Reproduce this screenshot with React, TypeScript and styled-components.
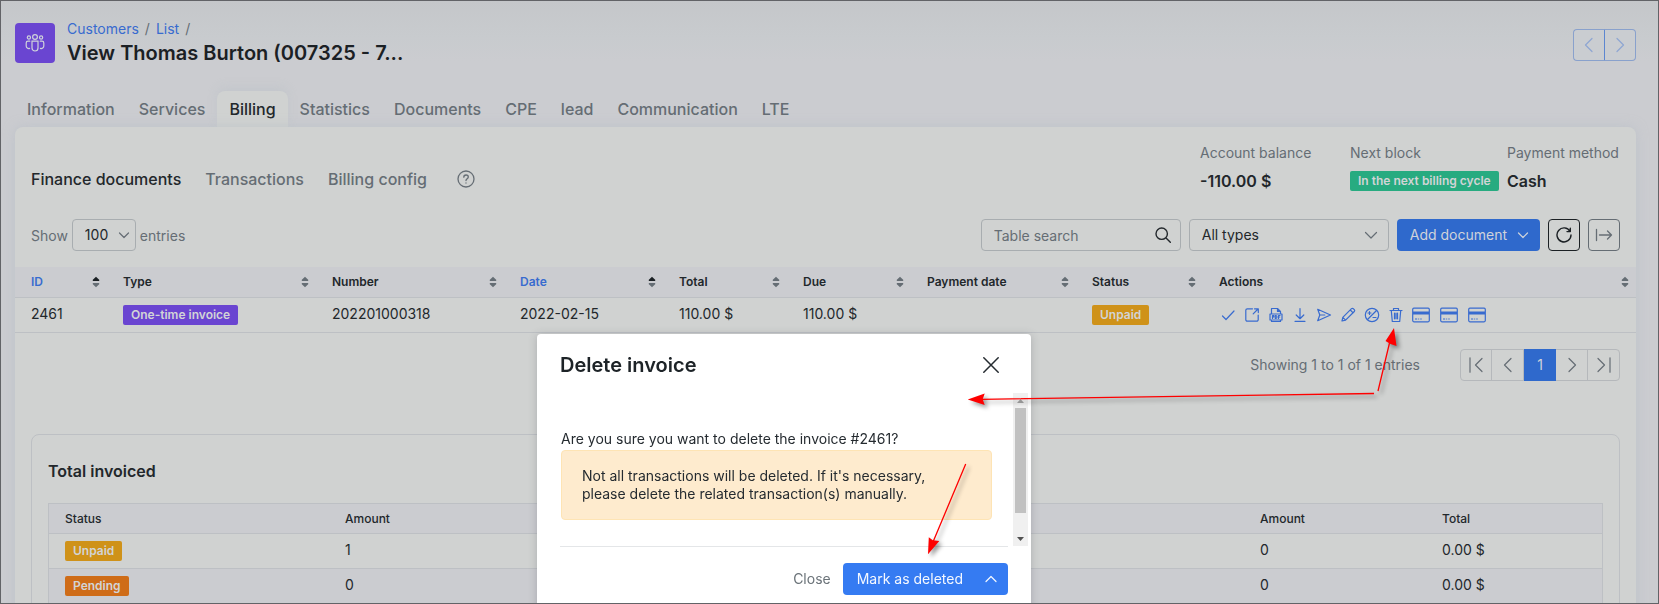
import React from "react";
import styled, { createGlobalStyle, css } from "styled-components";

const c = {
  page: "#cbccd0",
  card: "#d0d2d1",
  line: "#bdc0c4",
  border: "#a8adb0",
  muted: "#656d74",
  text: "#22272b",
  link: "#386bcf",
  primary: "#2f69cc",
  purple: "#6a45d1",
  green: "#27ab80",
  yellow: "#cf9219",
  orange: "#cf6c18",
  pale: "#cfd3da",
};

const Global = createGlobalStyle`
  *, *::before, *::after { box-sizing: border-box; }
  body {
    margin: 0;
    color: ${c.text};
    font: 400 14px/20px Inter, "Liberation Sans", sans-serif;
    background: ${c.page};
  }
  button, input, select { font: inherit; color: inherit; margin: 0; }
  a { color: ${c.link}; text-decoration: none; }
  h1, h2, p, dl, dd { margin: 0; }
`;

const Page = styled.div`
  height: 100vh;
  overflow: hidden;
  border: 1px solid #626367;
  padding: 22px 22px 0 14px;
  background: linear-gradient(#c5c7ca, #c8cbce 36px, ${c.page} 60px);
`;

const Header = styled.header`
  display: flex;
  align-items: flex-start;
  justify-content: space-between;
  height: 68px;
`;

const Heading = styled.div`
  display: flex;
  gap: 12px;
`;

const Logo = styled.div`
  display: grid;
  place-items: center;
  width: 40px;
  height: 40px;
  border-radius: 4px;
  background: ${c.purple};
  color: ${c.pale};
`;

const Crumbs = styled.nav`
  display: flex;
  gap: 6px;
  margin-top: -4px;
  color: ${c.muted};
`;

const Title = styled.h1`
  margin-top: 1px;
  font-size: 20px;
  line-height: 26px;
  font-weight: 600;
  color: #1b2024;
`;

const ButtonGroup = styled.div`
  display: flex;
`;

const NavButton = styled.button`
  display: grid;
  place-items: center;
  width: 31px;
  height: 32px;
  margin-top: 6px;
  padding: 0;
  border: 1px solid #89a1cc;
  background: #cacdd1;
  color: #8ea6d2;
  &:first-child { width: 32px; border-radius: 4px 0 0 4px; border-right-color: #5c86d0; }
  &:last-child { border-radius: 0 4px 4px 0; border-left: 0; }
`;

const Tabs = styled.nav`
  display: flex;
`;

const Tab = styled.a<{ $active?: boolean }>`
  height: 36px;
  padding: 8px 12px;
  font-size: 16px;
  line-height: 20px;
  font-weight: 500;
  color: ${c.muted};
  ${(p) => p.$active && css`
    color: ${c.text};
    background: ${c.card};
    border-radius: 8px 8px 0 0;
    box-shadow: 0 -4px 10px rgba(180, 190, 195, 0.3);
  `}
`;

const Card = styled.main`
  position: relative;
  min-height: 600px;
  border-radius: 8px;
  background: ${c.card};
  box-shadow: 0 0 12px rgba(178, 187, 196, 0.55);
`;

const CardTop = styled.div`
  display: flex;
  justify-content: space-between;
  align-items: flex-start;
  height: 92px;
  padding: 16px 16px 0;
`;

const SubNav = styled.nav`
  display: flex;
  align-items: center;
  gap: 24px;
  margin-top: 26px;
`;

const SubLink = styled.a<{ $active?: boolean }>`
  font-size: 16px;
  font-weight: 500;
  color: ${(p) => (p.$active ? c.text : c.muted)};
`;

const Help = styled.button`
  display: grid;
  margin-left: 6px;
  padding: 0;
  border: 0;
  background: none;
  color: ${c.muted};
`;

const Facts = styled.dl`
  display: grid;
  grid-template-columns: 150px 149px 121px;
  column-gap: 0;
`;

const Fact = styled.div`
  &:last-child { padding-left: 8px; }
  dt { color: ${c.muted}; }
  dd {
    display: flex;
    align-items: center;
    height: 20px;
    margin-top: 8px;
    font-size: 16px;
    font-weight: 600;
  }
`;

const Badge = styled.span<{ $color: string }>`
  display: inline-block;
  height: 20px;
  padding: 0 8px;
  border-radius: 2px;
  font-size: 12px;
  line-height: 20px;
  font-weight: 600;
  white-space: nowrap;
  vertical-align: top;
  color: #d2d4d6;
  background: ${(p) => p.$color};
`;

const Toolbar = styled.div`
  display: flex;
  justify-content: space-between;
  height: 48px;
  padding: 0 16px;
`;

const Group = styled.div<{ $gap: number }>`
  display: flex;
  align-items: center;
  gap: ${(p) => p.$gap}px;
  height: 32px;
`;

const Muted = styled.label`
  line-height: 22px;
  padding-top: 2px;
  color: ${c.muted};
`;

const Field = styled.div<{ $width: number; $iconColor?: string }>`
  position: relative;
  width: ${(p) => p.$width}px;
  height: 32px;
  color: ${(p) => p.$iconColor || c.muted};
  svg {
    position: absolute;
    right: 10px;
    top: 8px;
    pointer-events: none;
  }
  select + svg { right: ${(p) => (p.$width > 100 ? 10 : 4)}px; }
  input, select {
    width: 100%;
    height: 32px;
    padding: 0 12px;
    border: 1px solid ${c.border};
    border-radius: 4px;
    background: transparent;
    color: ${c.text};
    appearance: none;
    outline: 0;
  }
  input::placeholder { color: ${c.muted}; opacity: 1; }
`;

const Primary = styled.button<{ $color: string; $ink: string; $wide?: boolean }>`
  display: flex;
  align-items: center;
  gap: ${(p) => (p.$wide ? 20 : 8)}px;
  height: 32px;
  padding: ${(p) => (p.$wide ? "0 9px 0 14px" : "0 9px 0 13px")};
  border: 0;
  border-radius: 4px;
  white-space: nowrap;
  background: ${(p) => p.$color};
  color: ${(p) => p.$ink};
`;

const Square = styled.button<{ $color: string }>`
  display: grid;
  place-items: center;
  width: 32px;
  height: 32px;
  padding: 0;
  border: 1px solid ${(p) => p.$color};
  border-radius: 4px;
  background: transparent;
  color: ${(p) => p.$color};
`;

const Table = styled.table`
  width: 100%;
  table-layout: fixed;
  border-collapse: separate;
  border-spacing: 0;
  th, td {
    padding: 0 16px;
    text-align: left;
    border-bottom: 1px solid ${c.line};
    white-space: nowrap;
  }
  th {
    height: 31px;
    font-size: 12px;
    background: ${c.page};
  }
  td { height: 35px; padding: 7px 16px; vertical-align: top; line-height: 18px; }
`;

const Th = styled.th<{ $sorted?: boolean }>`
  font-weight: 600;
  color: ${(p) => (p.$sorted ? c.link : c.text)};
  > div { display: flex; justify-content: space-between; align-items: center; margin-right: -9px; }
`;

const Actions = styled.div`
  display: flex;
  align-items: center;
  gap: 8px;
  height: 20px;
  padding-left: 1px;
  color: ${c.link};
  button {
    display: grid;
    place-items: center;
    min-width: 16px;
    padding: 0;
    border: 0;
    background: none;
  }
  button:nth-child(n + 10) { margin-left: 2px; }
`;

const PagerRow = styled.div`
  display: flex;
  justify-content: flex-end;
  align-items: center;
  gap: 40px;
  padding: 16px 16px 0;
  color: ${c.muted};
`;

const Pager = styled.nav`
  display: flex;
  border: 1px solid #b5b8bb;
  border-radius: 4px;
`;

const PageButton = styled.button<{ $active?: boolean }>`
  display: grid;
  place-items: center;
  width: 32px;
  height: 30px;
  padding: 0;
  border: 0;
  border-right: 1px solid #b5b8bb;
  background: none;
  &:first-child { width: 31px; }
  &:last-child { border-right: 0; width: 31px; }
  ${(p) => p.$active && css`
    height: 32px;
    margin: -1px 0;
    border: 0;
    background: ${c.primary};
    color: ${c.pale};
  `}
`;

const Totals = styled.section`
  margin: 53px 16px 0;
  padding: 26px 16px;
  border: 1px solid ${c.line};
  border-radius: 8px;
  h2 { font-size: 16px; line-height: 20px; font-weight: 600; margin-bottom: 22px; }
`;

const TotalsTable = styled(Table)`
  border: 1px solid ${c.line};
  border-bottom: 0;
  th { font-weight: 500; height: 30px; }
  tbody tr:nth-child(even) { background: ${c.page}; }
`;

const Overlay = styled.div`
  position: fixed;
  inset: 1px;
  overflow: hidden;
  display: flex;
  justify-content: center;
  align-items: flex-start;
  padding: 333px 91px 0 0;
`;

const Dialog = styled.div`
  width: 494px;
  height: 300px;
  border-radius: 4px;
  background: #fff;
  color: #252b30;
  box-shadow: 0 1px 8px rgba(60, 65, 70, 0.25);
`;

const DialogHead = styled.div`
  display: flex;
  justify-content: space-between;
  align-items: center;
  height: 59px;
  padding: 3px 32px 0 23px;
  h2 { font-size: 20px; line-height: 28px; font-weight: 600; color: #1d2327; }
  button { display: grid; padding: 0; border: 0; background: none; }
`;

const DialogBody = styled.div`
  display: flex;
  height: 153px;
  margin-left: 23px;
`;

const Scrolled = styled.div`
  flex: 1;
  height: 154px;
  margin-right: 5px;
  padding: 36px 16px 0 1px;
  border-bottom: 1px solid #e4e6e8;
  p { margin-bottom: 1px; }
`;

const Notice = styled.div`
  height: 70px;
  padding: 16px 20px;
  border: 1px solid #fee4b4;
  border-radius: 4px;
  line-height: 18px;
  background: #feebce;
`;

const ScrollBar = styled.div`
  display: flex;
  flex-direction: column;
  align-items: center;
  width: 15px;
  margin-right: 3px;
  background: #f0f0f0;
`;

const Arrow = styled.span<{ $down?: boolean }>`
  display: grid;
  place-items: center;
  height: 15px;
  color: ${(p) => (p.$down ? "#505050" : "#a3a3a3")};
  margin-top: ${(p) => (p.$down ? "auto" : 0)};
`;

const Thumb = styled.div`
  width: 11px;
  height: 105px;
  background: #c1c1c1;
`;

const DialogFoot = styled.div`
  display: flex;
  justify-content: flex-end;
  align-items: center;
  gap: 12px;
  padding: 17px 23px 0;
`;

const Plain = styled.button`
  padding: 0;
  border: 0;
  background: none;
  && { color: #6b7379; }
`;

const Annotations = styled.svg`
  position: fixed;
  top: 0;
  left: 0;
  pointer-events: none;
  filter: drop-shadow(3px 3px 2px rgba(0, 0, 0, 0.4));
`;

type IconProps = { d: string; size?: number; box?: number; sw?: number; w?: number };
const Icon = ({ d, size = 16, box = 16, sw = 1.2, w }: IconProps) => (
  <svg width={w ?? size} height={size} viewBox={`0 0 ${w ?? box} ${box}`} fill="none" stroke="currentColor" strokeWidth={sw} strokeLinecap="round" strokeLinejoin="round" aria-hidden="true">
    <path d={d} />
  </svg>
);

const DOWN = "M2.5 5.500 8 11l5.500-5.500";
const DOWN_SMALL = "M3.500 6 8 10.500 12.500 6";
const LEFT = "M11 1.500 4.500 8l6.500 6.500";
const RIGHT = "M5 1.500 11.500 8 5 14.500";

const Sort = ({ up }: { up?: boolean }) => (
  <svg width="8" height="12" viewBox="0 0 8 12" aria-hidden="true">
    <path d="M.8 5V3.700L4 .8l3.200 2.900V5z" fill={up ? "#1b2024" : c.muted} />
    <path d="M.8 7v1.300L4 11.200l3.200-2.900V7z" fill={c.muted} />
  </svg>
);

const CreditCard = () => (
  <svg width="18" height="16" viewBox="0 0 18 16" fill="none" stroke="currentColor" aria-hidden="true">
    <rect x=".7" y="1.200" width="16.600" height="13.600" rx="1.200" strokeWidth="1.200" />
    <path d="M1 6h16" strokeWidth="3" />
    <path d="M3 12h2.200M6.200 12h1M8.300 12h1.400" />
  </svg>
);

const ACTIONS: [string, string][] = [
  ["Mark as paid", "M2.500 9l3.500 3.500 8-8.500"],
  ["Open", "M8.500 1.800H3.300a1.500 1.500 0 0 0-1.500 1.500v9.400a1.500 1.500 0 0 0 1.500 1.500h9.400a1.500 1.500 0 0 0 1.500-1.500V8M10.500 1.800h3.800v3.800M14 2 9.200 6.800"],
  ["View PDF", "M3.500 7V1.500h6l3 3V7M9.500 1.500v3h3M2 7h12v6H2zM3.500 13v1.500h9V13M4.500 11.500v-3h1.300v1.500H4.500M7.300 8.500v3h.5c1.500 0 1.500-3 0-3zM10.500 11.500v-3h1.500M10.500 10h1.200"],
  ["Download", "M8 1.500v10M4.200 8 8 11.700 11.800 8M3 14.300h10"],
  ["Send", "M1.700 2.300 14.500 8 1.700 13.700 3.800 8zM3.800 8h5"],
  ["Edit", "M2 14l.8-3.600 8.700-8.700a1.300 1.300 0 0 1 1.800 0l1 1a1.300 1.300 0 0 1 0 1.800l-8.700 8.700zM10.300 3l2.800 2.800M2.800 10.400l2.800 2.800"],
  ["Discount", "M8 1.300a6.700 6.700 0 1 0 0 13.400A6.700 6.700 0 1 0 8 1.300M4 12l8-8M4 6h3M5.500 4.500v3M9 10.500h3"],
  ["Delete", "M2 3.500h12M5.500 3.300V1.500h5v1.800M3.300 3.800l1 10.700h7.400l1-10.700M6.500 6.200v5.600M8 6.200v5.600M9.500 6.200v5.600"],
];

const COLUMNS: { name: string; width?: number; sorted?: boolean }[] = [
  { name: "ID", width: 92, sorted: true },
  { name: "Type", width: 209 },
  { name: "Number", width: 188 },
  { name: "Date", width: 159, sorted: true },
  { name: "Total", width: 124 },
  { name: "Due", width: 124 },
  { name: "Payment date", width: 165 },
  { name: "Status", width: 127 },
  { name: "Actions" },
];

const TABS = ["Information", "Services", "Billing", "Statistics", "Documents", "CPE", "lead", "Communication", "LTE"];

export default function App() {
  return (
    <>
      <Global />
      <Page>
        <Header>
          <Heading>
            <Logo>
              <svg width="20" height="20" viewBox="0 0 20 20" fill="none" stroke="currentColor" strokeWidth="1.200" strokeLinecap="round" aria-hidden="true">
                <circle cx="10" cy="4" r="2.400" />
                <circle cx="3.900" cy="4.500" r="1.600" />
                <circle cx="16.100" cy="4.500" r="1.600" />
                <path d="M7 8.200h6V15a3 3 0 0 1-6 0zM4.800 8.200H3a1.800 1.800 0 0 0-1.800 1.800v3A2.600 2.600 0 0 0 4.600 15.400M15.200 8.200H17a1.800 1.800 0 0 1 1.800 1.800v3a2.600 2.600 0 0 1-3.400 2.400" />
              </svg>
            </Logo>
            <div>
              <Crumbs aria-label="Breadcrumb">
                <a href="#customers">Customers</a><span>/</span>
                <a href="#list">List</a><span>/</span>
              </Crumbs>
              <Title>View Thomas Burton (007325 - 7...</Title>
            </div>
          </Heading>
          <ButtonGroup>
            <NavButton aria-label="Previous customer"><Icon d={LEFT} /></NavButton>
            <NavButton aria-label="Next customer"><Icon d={RIGHT} /></NavButton>
          </ButtonGroup>
        </Header>

        <Tabs>
          {TABS.map((t) => (
            <Tab key={t} href={`#${t}`} $active={t === "Billing"}>{t}</Tab>
          ))}
        </Tabs>

        <Card>
          <CardTop>
            <SubNav>
              <SubLink href="#finance" $active>Finance documents</SubLink>
              <SubLink href="#transactions">Transactions</SubLink>
              <SubLink href="#config">Billing config</SubLink>
              <Help aria-label="Help">
                <Icon size={18} box={18} sw={1.3} d="M9 1a8 8 0 1 0 0 16A8 8 0 1 0 9 1M6.800 7.200c0-3 4.500-2.800 4.500-.2C11.300 8.700 9 8.700 9 10.500M9 12.900v.2" />
              </Help>
            </SubNav>
            <Facts>
              <Fact><dt>Account balance</dt><dd>-110.00 $</dd></Fact>
              <Fact><dt>Next block</dt><dd><Badge $color={c.green}>In the next billing cycle</Badge></dd></Fact>
              <Fact><dt>Payment method</dt><dd>Cash</dd></Fact>
            </Facts>
          </CardTop>

          <Toolbar>
            <Group $gap={4}>
              <Muted htmlFor="size">Show</Muted>
              <Field $width={64}>
                <select id="size" defaultValue="100"><option>100</option></select>
                <Icon d={DOWN_SMALL} />
              </Field>
              <Muted htmlFor="size">entries</Muted>
            </Group>
            <Group $gap={8}>
              <Field $width={200} $iconColor={c.text}>
                <input type="text" aria-label="Table search" placeholder="Table search" />
                <Icon sw={1.4} d="M6.700 1a5.700 5.700 0 1 0 0 11.400A5.700 5.700 0 1 0 6.700 1M10.800 10.800 15.300 15.300" />
              </Field>
              <Field $width={200}>
                <select aria-label="Document type" defaultValue="All types"><option>All types</option></select>
                <Icon d={DOWN} />
              </Field>
              <Primary $color={c.primary} $ink={c.pale}>Add document<Icon d={DOWN_SMALL} /></Primary>
              <Square $color="#1b2024" aria-label="Refresh"><Icon sw={1.4} d="M14 4.300A7 7 0 1 0 15 8M14.300 1.300v3.300H11" /></Square>
              <Square $color={c.muted} aria-label="Export"><Icon w={18} sw={1.3} d="M1.500 2.500v11M4.500 8h12M12.500 4l4 4-4 4" /></Square>
            </Group>
          </Toolbar>

          <Table>
            <colgroup>{COLUMNS.map((k) => <col key={k.name} width={k.width} />)}</colgroup>
            <thead>
              <tr>
                {COLUMNS.map((k) => (
                  <Th key={k.name} $sorted={k.sorted}><div>{k.name}<Sort up={k.sorted} /></div></Th>
                ))}
              </tr>
            </thead>
            <tbody>
              <tr>
                <td>2461</td>
                <td><Badge $color={c.purple}>One-time invoice</Badge></td>
                <td>202201000318</td>
                <td>2022-02-15</td>
                <td>110.00 $</td>
                <td>110.00 $</td>
                <td />
                <td><Badge $color={c.yellow}>Unpaid</Badge></td>
                <td>
                  <Actions>
                    {ACTIONS.map(([label, d]) => <button key={label} aria-label={label}><Icon d={d} /></button>)}
                    {[1, 2, 3].map((n) => <button key={n} aria-label={`Pay by card ${n}`}><CreditCard /></button>)}
                  </Actions>
                </td>
              </tr>
            </tbody>
          </Table>

          <PagerRow>
            <span>Showing 1 to 1 of 1 entries</span>
            <Pager aria-label="Pagination">
              <PageButton aria-label="First"><Icon d="M2 .8v14.400M14 1.500 7.500 8l6.500 6.500" /></PageButton>
              <PageButton aria-label="Previous"><Icon d={LEFT} /></PageButton>
              <PageButton $active>1</PageButton>
              <PageButton aria-label="Next"><Icon d={RIGHT} /></PageButton>
              <PageButton aria-label="Last"><Icon d="M14 .8v14.400M2 1.500 8.500 8 2 14.500" /></PageButton>
            </Pager>
          </PagerRow>

          <Totals>
            <h2>Total invoiced</h2>
            <TotalsTable>
              <colgroup><col width="280" /><col width="280" /><col /><col width="182" /><col width="176" /></colgroup>
              <thead><tr><th>Status</th><th>Amount</th><th /><th>Amount</th><th>Total</th></tr></thead>
              <tbody>
                <tr><td><Badge $color={c.yellow}>Unpaid</Badge></td><td>1</td><td /><td>0</td><td>0.00 $</td></tr>
                <tr><td><Badge $color={c.orange}>Pending</Badge></td><td>0</td><td /><td>0</td><td>0.00 $</td></tr>
              </tbody>
            </TotalsTable>
          </Totals>
        </Card>
      </Page>

      <Overlay>
        <Dialog role="dialog" aria-labelledby="dialog-title">
          <DialogHead>
            <h2 id="dialog-title">Delete invoice</h2>
            <button aria-label="Close dialog"><Icon sw={1.5} d="M.8.800l14.400 14.400M15.200.800.800 15.200" /></button>
          </DialogHead>
          <DialogBody>
            <Scrolled>
              <p>Are you sure you want to delete the invoice #2461?</p>
              <Notice>Not all transactions will be deleted. If it's necessary, please delete the related transaction(s) manually.</Notice>
            </Scrolled>
            <ScrollBar>
              <Arrow><svg width="7" height="4" aria-hidden="true"><path d="M0 4 3.500 0 7 4z" fill="currentColor" /></svg></Arrow>
              <Thumb />
              <Arrow $down><svg width="7" height="4" aria-hidden="true"><path d="M0 0h7L3.500 4z" fill="currentColor" /></svg></Arrow>
            </ScrollBar>
          </DialogBody>
          <DialogFoot>
            <Plain>Close</Plain>
            <Primary $wide $color="#357bf2" $ink="#f4f8ff">Mark as deleted<Icon d="M3 10.500 8 5.500l5 5" /></Primary>
          </DialogFoot>
        </Dialog>
      </Overlay>

      <Annotations width="1640" height="600" aria-hidden="true">
        <g stroke="#fe0000" strokeWidth="1.300" fill="#fe0000">
          <path d="M1374 393.500 982 399.300M1378 391l11.500-48M965.700 464 933 542" />
          <path stroke="none" d="M967.700 399.500l17-6-2 5.800 2 5.700zM1394 328l2.500 18-6-2-5-3zM928 554.300l.8-17 4 3 6.500.8z" />
        </g>
      </Annotations>
    </>
  );
}
